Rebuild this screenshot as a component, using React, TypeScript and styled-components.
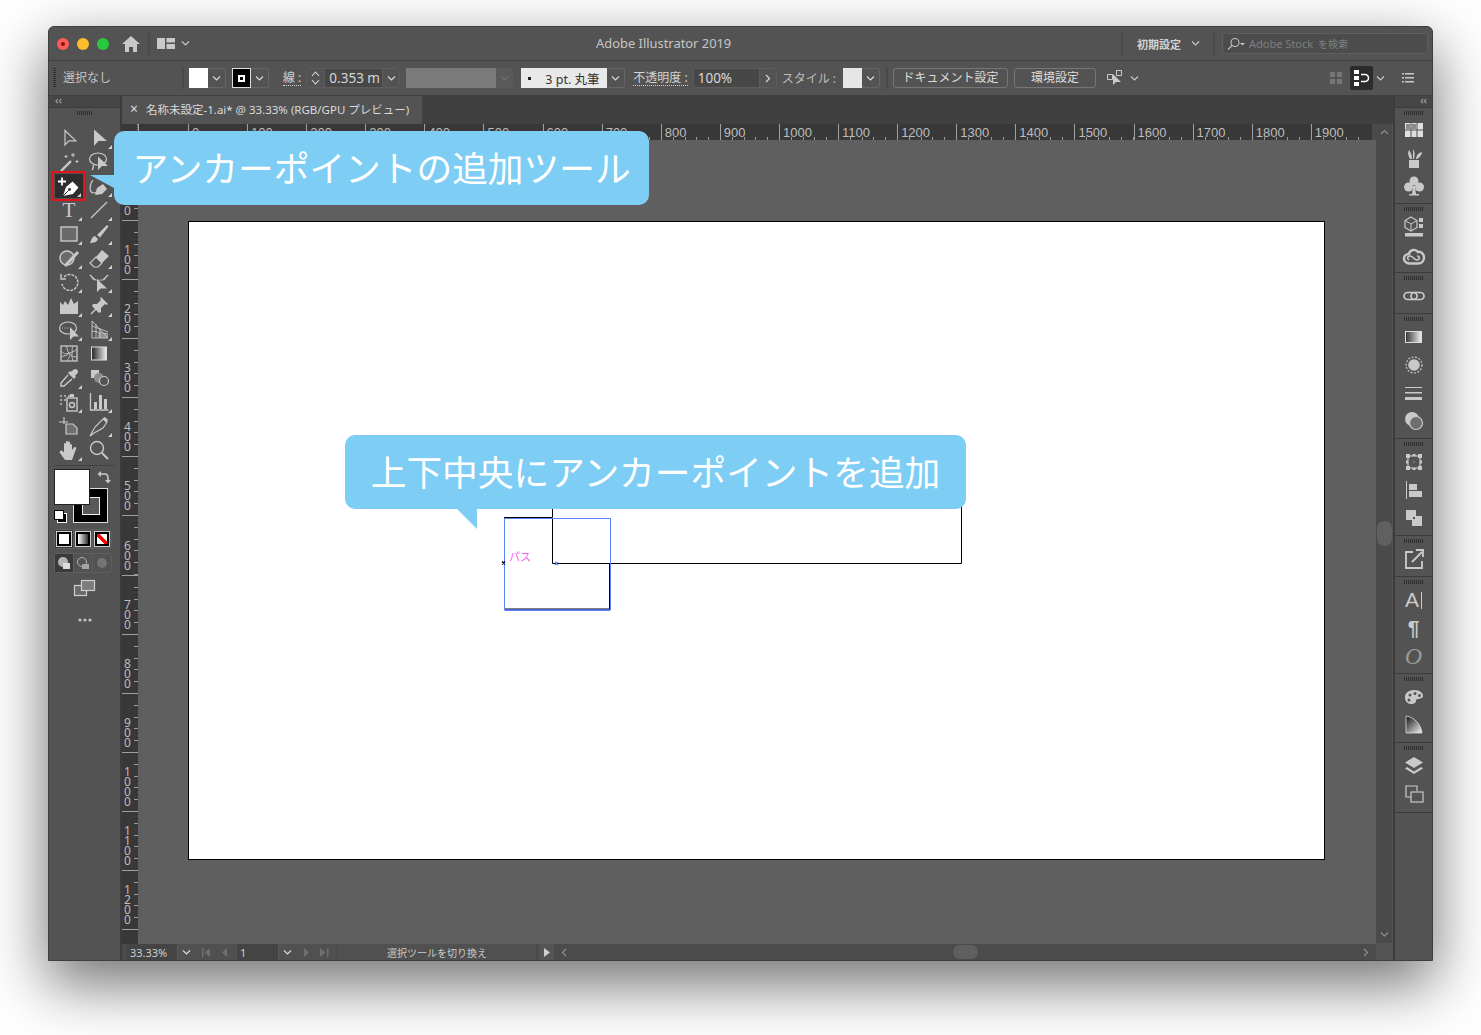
import React from "react"
import styled, { createGlobalStyle, css } from "styled-components"

const UI_FONT = `"Noto Sans", "Noto Sans CJK JP", sans-serif`
const INK = "#c9c9c9"

const GlobalStyle = createGlobalStyle`
  html, body {
    margin: 0;
    background: #fff;
  }
  body {
    width: 1481px;
    height: 1035px;
    overflow: hidden;
    font-family: ${UI_FONT};
  }
`

const Desktop = styled.div`
  padding: 26px 48px;
`

const Window = styled.div`
  position: relative;
  box-sizing: border-box;
  width: 1385px;
  height: 935px;
  display: flex;
  flex-direction: column;
  background: #535353;
  border: 1px solid #3e3e3e;
  border-radius: 6px 6px 0 0;
  box-shadow: 0 22px 60px 2px rgba(0, 0, 0, 0.55);
`

/* title bar */
const TitleBar = styled.div`
  flex: 0 0 33px;
  display: flex;
  align-items: center;
  border-bottom: 1px solid #3f3f3f;
  color: ${INK};
  border-radius: 6px 6px 0 0;
`

const Light = styled.span<{ $color: string; $dot?: boolean }>`
  position: relative;
  width: 12px;
  height: 12px;
  border-radius: 50%;
  background: ${(p) => p.$color};
  margin-right: 8px;
  &:first-child {
    margin-left: 8px;
  }
  ${(p) =>
    p.$dot &&
    css`
      &::after {
        content: "";
        position: absolute;
        left: 4px;
        top: 4px;
        width: 4px;
        height: 4px;
        border-radius: 50%;
        background: #7a1512;
      }
    `}
`

const VRule = styled.span<{ $gap?: number; $h?: number }>`
  flex: none;
  width: 2px;
  height: ${(p) => p.$h ?? 22}px;
  margin-left: ${(p) => p.$gap ?? 0}px;
  background: #4a4a4a;
`

const AppTitle = styled.div`
  flex: none;
  box-sizing: border-box;
  width: 931px;
  padding: 0 0 1px 406px;
  font-size: 12.9px;
  white-space: nowrap;
  color: #c6c6c6;
`

const WorkspaceLabel = styled.span`
  margin-left: 14px;
  font-size: 11px;
  font-weight: 700;
  color: #d2d2d2;
`

const SearchBox = styled.div`
  flex: none;
  box-sizing: border-box;
  width: 206px;
  height: 21px;
  margin-left: 7px;
  display: flex;
  align-items: center;
  gap: 3px;
  padding-left: 3px;
  background: #4c4c4c;
  border: 1px solid #5f5f5f;
  border-radius: 3px;
  color: #7f7f7f;
  font-size: 11px;
  white-space: nowrap;
`

const SearchHint = styled.span`
  font-size: 10px;
  margin-left: 2px;
`

/* control bar */
const ControlBar = styled.div`
  flex: 0 0 34px;
  display: flex;
  align-items: center;
  border-bottom: 1px solid #3f3f3f;
  color: ${INK};
  font-size: 12px;
`

const Grip = styled.span`
  flex: none;
  width: 3px;
  height: 20px;
  margin-left: 4px;
  background: repeating-linear-gradient(#2f2f2f 0 1px, transparent 1px 2px);
`

const SelectionLabel = styled.span`
  flex: none;
  width: 119px;
  margin: -2px 0 0 7px;
  color: #c4c4c4;
`

const Combo = styled.div<{ $gap: number }>`
  flex: none;
  display: flex;
  height: 20px;
  margin-left: ${(p) => p.$gap}px;
`

const Swatch = styled.span<{ $w?: number; $bg?: string }>`
  box-sizing: border-box;
  width: ${(p) => p.$w ?? 19}px;
  height: 20px;
  background: ${(p) => p.$bg ?? "#fff"};
  display: flex;
  align-items: center;
  justify-content: center;
`

const StrokeChip = styled.span`
  box-sizing: border-box;
  width: 19px;
  height: 20px;
  background: #000;
  border: 1px solid #ddd;
  display: flex;
  align-items: center;
  justify-content: center;
  &::after {
    content: "";
    width: 3px;
    height: 3px;
    border: 2px solid #fff;
    background: #000;
  }
`

const DropArrow = styled.span<{ $w?: number; $dim?: boolean }>`
  box-sizing: border-box;
  width: ${(p) => p.$w ?? 18}px;
  height: 20px;
  display: flex;
  align-items: center;
  justify-content: center;
  border: 1px solid ${(p) => (p.$dim ? "#5a5a5a" : "#666")};
  border-left: none;
  border-radius: 0 3px 3px 0;
  background: ${(p) => (p.$dim ? "#5a5a5a" : "transparent")};
  color: ${(p) => (p.$dim ? "#6f6f6f" : "#d8d8d8")};
`

const Field = styled.div<{ $gap: number }>`
  flex: none;
  display: flex;
  height: 20px;
  margin-left: ${(p) => p.$gap}px;
  background: #474747;
  border-radius: 3px;
  border: 1px solid #5c5c5c;
  box-sizing: border-box;
`

const FieldValue = styled.span<{ $w: number }>`
  width: ${(p) => p.$w}px;
  padding-left: 4px;
  box-sizing: border-box;
  font-size: 13.5px;
  line-height: 19px;
  color: #d6d6d6;
  white-space: nowrap;
`

const FieldEnd = styled.span<{ $w?: number; $left?: boolean }>`
  width: ${(p) => p.$w ?? 17}px;
  display: flex;
  flex-direction: column;
  gap: 3px;
  align-items: center;
  justify-content: center;
  color: #d8d8d8;
  background: #535353;
  ${(p) => (p.$left ? "border-right" : "border-left")}: 1px solid #5c5c5c;
`

const FieldLabel = styled.span<{ $gap: number; $dotted?: boolean }>`
  flex: none;
  margin-left: ${(p) => p.$gap}px;
  white-space: nowrap;
  line-height: 15px;
  ${(p) => p.$dotted && "border-bottom: 1px dotted #d0d0d0;"}
  color: ${(p) => (p.$dotted ? "#d4d4d4" : "#bdbdbd")};
`

const BrushValue = styled.span`
  box-sizing: border-box;
  width: 86px;
  height: 20px;
  display: flex;
  align-items: center;
  padding-left: 7px;
  gap: 14px;
  background: #e9e9e9;
  color: #333;
  font-size: 12.5px;
  white-space: nowrap;
  &::before {
    content: "";
    width: 3px;
    height: 3px;
    background: #222;
  }
`

const TextButton = styled.span<{ $w: number; $gap: number }>`
  flex: none;
  box-sizing: border-box;
  width: ${(p) => p.$w}px;
  height: 20px;
  margin-left: ${(p) => p.$gap}px;
  border: 1px solid #767676;
  border-radius: 3px;
  text-align: center;
  font-size: 12px;
  line-height: 18px;
  color: #dcdcdc;
`

const PlainIcon = styled.span<{ $gap: number }>`
  flex: none;
  margin-left: ${(p) => p.$gap}px;
  display: flex;
  align-items: center;
  color: ${INK};
`

const ModeButton = styled.span`
  flex: none;
  width: 23px;
  height: 24px;
  margin-left: 7px;
  border-radius: 2px;
  background: #2b2b2b;
  color: #fff;
  display: flex;
  align-items: center;
  justify-content: center;
`

/* body */
const Body = styled.div`
  flex: 1;
  min-height: 0;
  display: flex;
`

const ToolPanel = styled.div`
  flex: 0 0 71px;
  border-right: 2px solid #3c3c3c;
  display: flex;
  flex-direction: column;
`

const PanelHeader = styled.div<{ $right?: boolean }>`
  flex: 0 0 11px;
  background: #464646;
  border-bottom: 1px solid #3c3c3c;
  color: #b4b4b4;
  font-size: 11px;
  line-height: 8px;
  ${(p) => (p.$right ? "text-align: right; padding-right: 5px;" : "padding-left: 6px;")}
`

const Dots = styled.div<{ $w?: number }>`
  width: ${(p) => p.$w ?? 15}px;
  height: 4px;
  margin: 3px auto 0;
  background: repeating-linear-gradient(90deg, #2e2e2e 0 1px, transparent 1px 2px);
`

const ToolGrid = styled.div`
  display: grid;
  grid-template-columns: 30px 30px;
  grid-auto-rows: 24px;
  padding: 11px 0 0 5px;
`

const ToolCell = styled.div<{ $active?: boolean; $corner?: boolean }>`
  position: relative;
  display: flex;
  align-items: center;
  justify-content: center;
  color: ${(p) => (p.$active ? "#fff" : INK)};
  ${(p) =>
    p.$active &&
    css`
      margin: 0 1px;
      background: #2d2d2d;
      outline: 2px solid #e1121c;
      outline-offset: 1px;
    `}
  ${(p) =>
    p.$corner &&
    css`
      &::after {
        content: "";
        position: absolute;
        right: 2px;
        bottom: 1px;
        border-style: solid;
        border-width: 0 0 4px 4px;
        border-color: transparent transparent #cfcfcf transparent;
      }
    `}
`

const TypeGlyph = styled.span`
  font-family: "Liberation Serif", serif;
  font-size: 21px;
  line-height: 24px;
  font-weight: 400;
`

const PanelRule = styled.div`
  height: 1px;
  margin: 3px 5px 0;
  background: #444;
`

const ColorWell = styled.div`
  position: relative;
  height: 57px;
  margin-top: 3px;
`

const FillChip = styled.div`
  position: absolute;
  z-index: 2;
  left: 5px;
  top: 0;
  box-sizing: border-box;
  width: 36px;
  height: 36px;
  background: #fff;
  border: 1px solid #222;
`

const StrokeWell = styled.div`
  position: absolute;
  left: 24px;
  top: 19px;
  box-sizing: border-box;
  width: 35px;
  height: 35px;
  background: #000;
  border: 1px solid #ddd;
  display: flex;
  align-items: center;
  justify-content: center;
  &::after {
    content: "";
    width: 16px;
    height: 16px;
    background: #595959;
    border: 1px solid #eee;
  }
`

const SwapIcon = styled.span`
  position: absolute;
  left: 48px;
  top: -2px;
  color: ${INK};
`

const MiniDefault = styled.span`
  position: absolute;
  left: 5px;
  top: 41px;
  width: 8px;
  height: 8px;
  background: #fff;
  border: 1px solid #000;
  box-shadow: 3px 3px 0 -1px #000, 3px 3px 0 0 #fff;
`

const SegRow = styled.div<{ $gap: number }>`
  display: flex;
  width: 58px;
  height: 20px;
  margin: ${(p) => p.$gap}px 0 0 5px;
  border: 1px solid #5e5e5e;
  box-sizing: border-box;
  border-radius: 3px;
`

const Seg = styled.span<{ $on?: boolean }>`
  flex: 1;
  display: flex;
  align-items: center;
  justify-content: center;
  background: ${(p) => (p.$on ? "#3a3a3a" : "transparent")};
  & + & {
    border-left: 1px solid #5e5e5e;
  }
`

const ModeChip = styled.span<{ $kind: "fill" | "grad" | "none" }>`
  box-sizing: border-box;
  width: 14px;
  height: 14px;
  border: 2px solid #000;
  outline: 1px solid #d0d0d0;
  ${(p) => p.$kind === "fill" && "background: #fff;"}
  ${(p) => p.$kind === "grad" && "background: linear-gradient(90deg, #fff, #333);"}
  ${(p) =>
    p.$kind === "none" &&
    "background: linear-gradient(135deg, #fff 0 38%, #f00 38% 62%, #fff 62%); transform: scaleX(-1);"}
`

const PanelIcon = styled.div<{ $gap: number }>`
  display: flex;
  justify-content: center;
  margin-top: ${(p) => p.$gap}px;
  color: ${INK};
`

const Center = styled.div`
  flex: 1;
  min-width: 0;
  display: flex;
  flex-direction: column;
`

const TabBar = styled.div`
  flex: 0 0 28px;
  box-sizing: border-box;
  display: flex;
  background: #404040;
`

const DocTab = styled.div`
  width: 300px;
  box-sizing: border-box;
  height: 28px;
  background: #535353;
  padding: 0 0 2px 8px;
  display: flex;
  align-items: center;
  gap: 8px;
  font-size: 11.5px;
  color: #dadada;
  white-space: nowrap;
`

const TabClose = styled.span`
  font-size: 14px;
  line-height: 14px;
`

const Workspace = styled.div`
  flex: 1;
  min-height: 0;
  display: flex;
`

const MainColumn = styled.div`
  flex: 0 0 1254px;
  display: flex;
  flex-direction: column;
`

const HRuler = styled.div`
  flex: 0 0 16px;
  display: flex;
  background: #4a4a4a;
`

const RulerCorner = styled.div`
  flex: 0 0 16px;
  background: #383838;
  border-right: 1px dotted #8a8a8a;
  box-sizing: border-box;
`

const HRulerTrack = styled.div`
  display: flex;
  width: 1234px;
  background: #383838;
`

const HTick = styled.div<{ $w: number }>`
  flex: 0 0 ${(p) => p.$w}px;
  box-sizing: border-box;
  height: 16px;
  padding: 1px 0 0 3px;
  border-left: 1px solid #a0a0a0;
  font-family: "Liberation Sans", sans-serif;
  font-size: 13px;
  line-height: 15px;
  color: #bdbdbd;
  background: repeating-linear-gradient(
      90deg,
      transparent 0 10.82px,
      #9a9a9a 10.82px 11.82px
    )
    left bottom / 100% 3px no-repeat;
`

const CanvasRow = styled.div`
  flex: 1;
  min-height: 0;
  display: flex;
`

const VRuler = styled.div`
  flex: 0 0 16px;
  box-sizing: border-box;
  padding-top: 21.9px;
  background: #383838;
  overflow: hidden;
`

const VTick = styled.div`
  box-sizing: border-box;
  height: 59.1px;
  display: flex;
  flex-direction: column;
  justify-content: flex-end;
  padding: 0 0 4px 2px;
  border-bottom: 1px solid #a0a0a0;
  background: repeating-linear-gradient(
      transparent 0 10.82px,
      #9a9a9a 10.82px 11.82px
    )
    right top / 4px 100% no-repeat;
`

const VDigits = styled.span`
  display: block;
  width: 8px;
  word-break: break-all;
  font-size: 12px;
  line-height: 10px;
  color: #bdbdbd;
`

const Canvas = styled.div`
  flex: 1;
  padding: 81px 0 0 50px;
  background: #5f5f5f;
`

const Artboard = styled.div`
  position: relative;
  box-sizing: border-box;
  width: 1137px;
  height: 639px;
  background: #fff;
  border: 1px solid #000;
`

const Artwork = styled.svg`
  position: absolute;
  left: -1px;
  top: -1px;
`

const PathHint = styled.span`
  position: absolute;
  left: 320px;
  top: 328px;
  font-size: 11px;
  line-height: 14px;
  color: #f55bf5;
`

const StatusBar = styled.div`
  flex: 0 0 16px;
  display: flex;
  background: #4b4b4b;
  font-size: 11px;
  color: #cfcfcf;
`

const StatusField = styled.span<{ $gap?: number; $w: number }>`
  flex: none;
  box-sizing: border-box;
  width: ${(p) => p.$w}px;
  margin-left: ${(p) => p.$gap ?? 0}px;
  padding: 3px 0 0 3px;
  line-height: 12px;
  background: #444;
  border-radius: 2px 0 0 0;
`

const StatusDrop = styled.span`
  flex: none;
  width: 17px;
  display: flex;
  align-items: center;
  justify-content: center;
  color: #dcdcdc;
  background: #515151;
  border-left: 1px solid #5a5a5a;
  box-sizing: border-box;
`

const StatusNav = styled.span<{ $w: number }>`
  flex: none;
  width: ${(p) => p.$w}px;
  display: flex;
  align-items: center;
  justify-content: center;
  gap: 9px;
  color: #6f6f6f;
  background: #505050;
`

const StatusMessage = styled.span`
  flex: none;
  width: 198px;
  margin-left: 2px;
  background: #505050;
  text-align: center;
  font-size: 10px;
  line-height: 18px;
  white-space: nowrap;
  color: #cacaca;
  height: 16px;
`

const StatusPlay = styled.span`
  flex: none;
  width: 15px;
  margin-left: 3px;
  background: #555;
  display: flex;
  align-items: center;
  justify-content: center;
  color: #d0d0d0;
`

const HScroll = styled.div`
  flex: 1;
  display: flex;
  align-items: center;
  justify-content: space-between;
  padding: 0 6px;
  color: #8f8f8f;
`

const HThumb = styled.span`
  width: 25px;
  height: 14px;
  border-radius: 7px;
  background: #5f5f5f;
`

const VScroll = styled.div`
  flex: 0 0 16px;
  display: flex;
  flex-direction: column;
  align-items: center;
  background: #4a4a4a;
  color: #8f8f8f;
`

const VEnd = styled.span`
  flex: 0 0 17px;
  display: flex;
  align-items: center;
  justify-content: center;
`

const VThumb = styled.span`
  width: 15px;
  height: 25px;
  margin-top: 380px;
  border-radius: 7px;
  background: #606060;
`

const VTail = styled(VEnd)`
  margin-top: auto;
`

const VCorner = styled.span`
  flex: 0 0 17px;
  align-self: stretch;
  background: #555;
`

const Dock = styled.div`
  flex: 0 0 39px;
  box-sizing: border-box;
  border-left: 2px solid #3c3c3c;
  display: flex;
  flex-direction: column;
`

const DockGroup = styled.div<{ $h: number; $lead: number; $step: number }>`
  flex: 0 0 ${(p) => p.$h}px;
  box-sizing: border-box;
  border-bottom: 1px solid #3c3c3c;
  color: ${INK};
  & > svg,
  & > span {
    display: flex;
    align-items: center;
    justify-content: center;
    width: 24px;
    height: 28px;
    margin: ${(p) => p.$step}px auto 0;
  }
  & > svg {
    height: 24px;
    padding: 2px 0;
  }
  & > div + svg,
  & > div + span {
    margin-top: ${(p) => p.$lead}px;
  }
`

const DockGlyph = styled.span<{ $serif?: boolean; $bold?: boolean }>`
  font-family: ${(p) => (p.$serif ? `"Liberation Serif", serif` : `"Liberation Sans", sans-serif`)};
  font-size: ${(p) => (p.$serif ? 24 : 21)}px;
  font-style: ${(p) => (p.$serif ? "italic" : "normal")};
  font-weight: ${(p) => (p.$bold ? 700 : 400)};
  color: ${(p) => (p.$serif ? "#9a9a9a" : INK)};
`

const CaretBar = styled.i`
  width: 1px;
  height: 17px;
  margin-left: 2px;
  background: ${INK};
`

/* callouts sit on top of the app window */
const Callout = styled.div<{ $left: number; $top: number; $w: number }>`
  position: absolute;
  z-index: 5;
  left: ${(p) => p.$left}px;
  top: ${(p) => p.$top}px;
  width: ${(p) => p.$w}px;
  height: 74px;
  box-sizing: border-box;
  border-radius: 10px;
  background: #7dcdf4;
  color: #fff;
  font-family: "Noto Sans CJK JP", sans-serif;
  font-size: 35.7px;
  line-height: 72px;
  text-align: center;
  white-space: nowrap;
`

const TailLeft = styled.span`
  position: absolute;
  left: -24px;
  top: 44px;
  border-style: solid;
  border-width: 0 24px 13px 0;
  border-color: transparent #7dcdf4 transparent transparent;
`

const TailDown = styled.span`
  position: absolute;
  left: 112px;
  top: 74px;
  border-style: solid;
  border-width: 0 20px 20px 0;
  border-color: transparent #7dcdf4 transparent transparent;
`

/* small drawings */
type IconProps = { size?: number; children?: React.ReactNode }

const Icon = ({ size = 24, children }: IconProps) => (
  <svg width={size} height={size} viewBox="0 0 24 24" fill="currentColor" stroke="none">
    {children}
  </svg>
)

const Chevron = ({ dir = "down" }: { dir?: "down" | "up" | "left" | "right" }) => {
  const d = {
    down: "M1 2.5 4.5 6 8 2.5",
    up: "M1 6 4.5 2.5 8 6",
    left: "M6 1 2.5 4.5 6 8",
    right: "M3 1 6.5 4.5 3 8",
  }[dir]
  return (
    <svg width="9" height="9" viewBox="0 0 9 9" fill="none" stroke="currentColor" strokeWidth="1.2">
      <path d={d} />
    </svg>
  )
}

const S = (props: React.SVGProps<SVGPathElement>) => (
  <path fill="none" stroke="currentColor" strokeWidth={1.2} {...props} />
)

const tools: { key: string; corner?: boolean; active?: boolean; icon: React.ReactNode }[] = [
  { key: "select", icon: <S d="M8 4.5v14.5l3.8-4.2h7z" /> },
  { key: "direct", corner: true, icon: <path d="M7 3.5V20l4.5-5H20z" /> },
  {
    key: "wand",
    icon: (
      <>
        <S d="M4 21 14 11" strokeWidth={2.4} />
        <S d="M16 3v4M14 5h4M9 5v3M7.5 6.5h3M20 10v3M18.5 11.5h3" strokeWidth={1} />
      </>
    ),
  },
  {
    key: "lasso",
    icon: (
      <>
        <ellipse cx="11" cy="9" rx="8.5" ry="6" fill="none" stroke="currentColor" strokeWidth="1.2" />
        <S d="M6 15c1 2 0 4-1 5" />
        <path d="M11 6.5V20l4-4h6z" />
      </>
    ),
  },
  {
    key: "penAdd",
    active: true,
    corner: true,
    icon: (
      <>
        <S d="M1 7.5h8M5 3.5v8" strokeWidth={1.8} />
        <path d="M6 22l3-9 6.5-5.5 6 6-5.5 6.5z" />
        <path d="M6 22l5.5-5.5" stroke="#2d2d2d" strokeWidth="1" />
        <circle cx="12.5" cy="15.5" r="1.4" fill="#2d2d2d" />
      </>
    ),
  },
  {
    key: "curvature",
    corner: true,
    icon: (
      <>
        <S d="M6 6C2 11 2 19 7 19c3 0 4-3 5-5" />
        <path d="M8 21l2-7 6-4 4 5-5 5z" />
      </>
    ),
  },
  { key: "type", corner: true, icon: <TypeGlyph>T</TypeGlyph> },
  { key: "line", corner: true, icon: <S d="M4 20 20 4" /> },
  {
    key: "rect",
    corner: true,
    icon: <rect x="4" y="5" width="16" height="14" fill="#6a6a6a" stroke="currentColor" strokeWidth="1.4" />,
  },
  {
    key: "brush",
    corner: true,
    icon: (
      <>
        <path d="M3 21c1-1 1-6 5-7l3 3c-1 3-4 4-8 4z" />
        <path d="M10 13 20 3l1.5 1.5-8.5 11z" />
      </>
    ),
  },
  {
    key: "blob",
    corner: true,
    icon: (
      <>
        <circle cx="10" cy="12" r="7" fill="#6a6a6a" stroke="currentColor" strokeWidth="1.4" />
        <S d="M8 20 21 6" strokeWidth={3} />
      </>
    ),
  },
  {
    key: "eraser",
    corner: true,
    icon: (
      <>
        <path d="M9 11 15 4l7 6-7 7z" />
        <S d="M9 11l6 6-4 4H7l-4-4z" />
      </>
    ),
  },
  {
    key: "rotate",
    corner: true,
    icon: (
      <>
        <S d="M7 7a8 8 0 1 1-2 7" strokeDasharray="3 1" strokeWidth={1.4} />
        <S d="M4 4v5h5" strokeWidth={1.4} />
      </>
    ),
  },
  {
    key: "scale",
    corner: true,
    icon: (
      <>
        <S d="M3 5l5 5M21 5l-5 5" strokeWidth={1.4} />
        <S d="M5 8c3 3 11 3 14 0" strokeDasharray="2 1" />
        <path d="M10 9v13l3.5-3.5H20z" />
      </>
    ),
  },
  { key: "warp", corner: true, icon: <path d="M3 20V8l3 3 2-4 3 4 3-7 3 6 4-3v13z" /> },
  {
    key: "pin",
    corner: true,
    icon: (
      <>
        <path d="M14 3l7 7-2 1-1-1-4 4 0 4-2 1-7-7 1-2h4l4-4-1-1z" />
        <S d="M9 15l-5 5" strokeWidth={1.4} />
      </>
    ),
  },
  {
    key: "shape",
    corner: true,
    icon: (
      <>
        <ellipse cx="11" cy="10" rx="8.5" ry="6" fill="none" stroke="currentColor" strokeWidth="1.2" />
        <S d="M5 10h7" strokeDasharray="1 1.5" />
        <path d="M13 9v13l3.5-3.5H22z" />
      </>
    ),
  },
  {
    key: "perspective",
    corner: true,
    icon: (
      <>
        <S d="M5 3v17h16L5 3zM5 8l16 6M5 13l16 3M9 6v14M13 10v10" strokeWidth={0.9} />
        <path d="M11 15l10 1v4H11z" opacity="0.5" />
      </>
    ),
  },
  {
    key: "mesh",
    icon: (
      <>
        <rect x="4" y="4" width="16" height="15" fill="none" stroke="currentColor" strokeWidth="1.3" />
        <S d="M4 9c4 4 5 3 8 2s5-1 8-4M4 15c3-2 5 0 8-4M12 11c2 2 3 4 8 4M9 4c2 3 1 5 3 7s0 5-2 8M16 4c-2 3 0 5-1 8s1 4 1 7" strokeWidth={0.9} />
      </>
    ),
  },
  {
    key: "gradient",
    icon: (
      <>
        <defs>
          <linearGradient id="toolGrad">
            <stop offset="0" stopColor="#222" />
            <stop offset="1" stopColor="#eee" />
          </linearGradient>
        </defs>
        <rect x="4.5" y="5" width="15" height="13" fill="url(#toolGrad)" stroke="#ddd" />
      </>
    ),
  },
  {
    key: "dropper",
    corner: true,
    icon: (
      <>
        <path d="M18 3a3 3 0 0 1 3 3c0 1-3 4-3 4l1 1-2 2-6-6 2-2 1 1s3-3 4-3z" />
        <S d="M11 9 4 17v3h3l8-7" strokeWidth={1.4} />
      </>
    ),
  },
  {
    key: "blend",
    icon: (
      <>
        <path d="M4 4h8v8H4z" />
        <circle cx="12" cy="12" r="5" fill="#8d8d8d" />
        <circle cx="17" cy="15" r="4.5" fill="#535353" stroke="currentColor" strokeWidth="1.2" />
      </>
    ),
  },
  {
    key: "spray",
    corner: true,
    icon: (
      <>
        <path d="M3 5h2v2H3zM7 5h2v2H7zM3 9h2v2H3zM7 9h2v2H7zM3 13h2v2H3zM11 5h2v2h-2z" opacity="0.7" />
        <path d="M13 4h4v3h-4z" />
        <rect x="10" y="8" width="10" height="13" fill="none" stroke="currentColor" strokeWidth="1.4" />
        <circle cx="15" cy="15" r="2.5" fill="none" stroke="currentColor" strokeWidth="1.4" />
      </>
    ),
  },
  {
    key: "graph",
    corner: true,
    icon: (
      <>
        <S d="M3.5 3v17h18" strokeWidth={1.3} />
        <path d="M7 12h3v7H7zM12 5h3v14h-3zM17 9h3v10h-3z" />
      </>
    ),
  },
  {
    key: "artboard",
    icon: (
      <>
        <S d="M7 3v7M2 8h9" />
        <path d="M9 10h7l4 4v6H9z" fill="#6f6f6f" stroke="currentColor" strokeWidth="1.2" />
      </>
    ),
  },
  {
    key: "slice",
    corner: true,
    icon: (
      <>
        <S d="M3 22l5-9 8-8 4 3-4 6-9 5z" />
        <path d="M16 4l2-1 3 3-2 3z" />
      </>
    ),
  },
  {
    key: "hand",
    corner: true,
    icon: (
      <path d="M8 22l-5-7c-1-2 1-3 2.5-2L7 14.5V6c0-1.5 2-1.5 2 0v5.5V4c0-1.5 2-1.5 2 0v7.5V4.5c0-1.5 2-1.5 2 0V12V7c0-1.5 2-1.5 2 0V12l2-2.5c1-1 3 0 2 1.5l-4 11z" />
    ),
  },
  {
    key: "zoom",
    icon: (
      <>
        <circle cx="10" cy="10" r="6.5" fill="none" stroke="currentColor" strokeWidth="1.4" />
        <S d="M15 15l6 6" strokeWidth={2} />
      </>
    ),
  },
]

const dockGroups: { h: number; lead: number; step?: number; items: React.ReactNode[] }[] = [
  {
    h: 96,
    lead: 1,
    items: [
      <Icon key="swatches">
        <path d="M3 5h18v14H3z" fill="#e0e0e0" />
        <path d="M3 12h18M9 5v14M15 5v14" stroke="#535353" strokeWidth="1" />
        <path d="M4 6h4v5H4zM9.5 6H14v5H9.5z" fill="#8a8a8a" />
      </Icon>,
      <Icon key="brushes">
        <path d="M7 14h10v8H7z" />
        <path d="M8 13c-1-3-3-5-1-9 2 3 3 5 3 9zM11 13V3c2 3 2 6 1 10zM14 13c0-3 2-6 6-7 0 3-3 6-5 7z" />
      </Icon>,
      <Icon key="symbols">
        <circle cx="12" cy="7" r="4.5" />
        <circle cx="6.5" cy="13" r="4.5" />
        <circle cx="17.5" cy="13" r="4.5" />
        <path d="M11 12h2l1 8h3v1.5H7V20h3z" />
      </Icon>,
    ],
  },
  {
    h: 69,
    lead: 2,
    step: 3,
    items: [
      <Icon key="libraries">
        <path d="M9 2l6 3.5v7L9 16l-6-3.5v-7z" fill="none" stroke="currentColor" strokeWidth="1.2" />
        <path d="M3 5.5l6 3.5 6-3.5M9 9v7" fill="none" stroke="currentColor" strokeWidth="1" />
        <path d="M17 3h4v4h-4zM17 9h4v4h-4zM3 18h18v3.5H3z" />
      </Icon>,
      <Icon key="cc">
        <path
          d="M7 8a5 5 0 0 1 9-2c3-1 6 2 6 5.5 0 3-2 6-6 6H7.5C4 17.5 2 15 2 12.5 2 10 4 8 7 8z"
          fill="none"
          stroke="currentColor"
          strokeWidth="2.4"
        />
        <path d="M7 14c-2-1-2-4 1-4 3 0 4 4 7 4 3 0 3-4 0-4" fill="none" stroke="currentColor" strokeWidth="1.6" />
      </Icon>,
    ],
  },
  {
    h: 41,
    lead: 2,
    items: [
      <Icon key="links">
        <rect x="2" y="8.5" width="13" height="7" rx="3.5" fill="none" stroke="currentColor" strokeWidth="1.7" />
        <rect x="9" y="8.5" width="13" height="7" rx="3.5" fill="none" stroke="currentColor" strokeWidth="1.7" />
      </Icon>,
    ],
  },
  {
    h: 125,
    lead: 2,
    items: [
      <Icon key="gradient">
        <defs>
          <linearGradient id="dockGrad">
            <stop offset="0" stopColor="#333" />
            <stop offset="1" stopColor="#f2f2f2" />
          </linearGradient>
        </defs>
        <rect x="3.5" y="6.5" width="16" height="11" fill="url(#dockGrad)" stroke="#ddd" />
      </Icon>,
      <Icon key="sun">
        <circle cx="12" cy="12" r="5.8" />
        <circle cx="12" cy="12" r="8" fill="none" stroke="currentColor" strokeWidth="1.2" strokeDasharray="2 1.5" />
      </Icon>,
      <Icon key="stroke">
        <path d="M3 6h17v1H3zM3 11h17v1.5H3zM3 16h17v3H3z" />
      </Icon>,
      <Icon key="transparency">
        <circle cx="10" cy="10" r="7" />
        <circle cx="14" cy="14" r="6.5" fill="#6f6f6f" stroke="currentColor" strokeWidth="1.2" />
      </Icon>,
    ],
  },
  {
    h: 97,
    lead: 2,
    items: [
      <Icon key="transform">
        <rect x="6" y="6" width="12" height="12" fill="none" stroke="currentColor" strokeWidth="1.2" />
        <path d="M4 4h4v4H4zM16 4h4v4h-4zM4 16h4v4H4zM16 16h4v4h-4zM10.5 4h3v2h-3zM10.5 18h3v2h-3zM4 10.5h2v3H4zM18 10.5h2v3h-2zM11.5 11.5h1v1h-1z" />
      </Icon>,
      <Icon key="align">
        <path d="M4 3h1v18H4zM7 6h8v6H7zM7 13h13v6H7z" />
      </Icon>,
      <Icon key="pathfinder">
        <path d="M4 4h10v6h-4v4H4z" />
        <path d="M14 10h6v10H10v-6h4z" />
        <rect x="10.5" y="10.5" width="3" height="3" fill="none" stroke="currentColor" />
      </Icon>,
    ],
  },
  {
    h: 41,
    lead: 2,
    items: [
      <Icon key="export">
        <path d="M11 5H4v16h16v-7" fill="none" stroke="currentColor" strokeWidth="1.8" />
        <path d="M10 15 20 5M14 3h7v7" fill="none" stroke="currentColor" strokeWidth="1.8" />
      </Icon>,
    ],
  },
  {
    h: 97,
    lead: 2,
    items: [
      <DockGlyph key="character">
        A
        <CaretBar />
      </DockGlyph>,
      <DockGlyph key="paragraph" $bold>
        ¶
      </DockGlyph>,
      <DockGlyph key="opentype" $serif>
        O
      </DockGlyph>,
    ],
  },
  {
    h: 69,
    lead: 2,
    items: [
      <Icon key="palette">
        <path d="M3 12c0-4 4-7 9-7 6 0 9 3 9 6 0 2-3 3-5 3s-2 1-2 2-1 3-5 3-6-3-6-7z" />
        <circle cx="8" cy="10" r="1.5" fill="#535353" />
        <circle cx="13" cy="8.5" r="1.5" fill="#535353" />
        <circle cx="17.5" cy="10.5" r="1.5" fill="#535353" />
        <circle cx="7" cy="15" r="1.5" fill="#535353" />
      </Icon>,
      <Icon key="guide">
        <defs>
          <linearGradient id="guideGrad" x1="0" y1="0" x2="1" y2="1">
            <stop offset="0" stopColor="#111" />
            <stop offset="0.6" stopColor="#999" />
            <stop offset="1" stopColor="#f4f4f4" />
          </linearGradient>
        </defs>
        <path d="M4 3c8 1 15 8 16 17H4z" fill="url(#guideGrad)" stroke="#ddd" strokeWidth="0.8" />
      </Icon>,
    ],
  },
  {
    h: 70,
    lead: 2,
    items: [
      <Icon key="layers">
        <path d="M12 3l9 5.5-9 5.5-9-5.5z" />
        <path d="M5 13l-2 1.5L12 20l9-5.500-2-1.500-7 4.500z" />
      </Icon>,
      <Icon key="artboards">
        <path d="M15 9V4H4v11h5" fill="none" stroke="currentColor" strokeWidth="1.2" />
        <rect x="9" y="10" width="12" height="10" fill="none" stroke="currentColor" strokeWidth="1.2" />
      </Icon>,
    ],
  },
]

const H_TICKS = [-100, 0, 100, 200, 300, 400, 500, 600, 700, 800, 900, 1000, 1100, 1200, 1300, 1400, 1500, 1600, 1700, 1800, 1900]
const V_TICKS = [0, 100, 200, 300, 400, 500, 600, 700, 800, 900, 1000, 1100, 1200]

const App = () => (
  <Desktop>
    <GlobalStyle />
    <Window>
      <TitleBar>
        <Light $color="#fc5b57" $dot />
        <Light $color="#febb2c" />
        <Light $color="#29c93f" />
        <PlainIcon $gap={4}>
          <svg width="20" height="18" viewBox="0 0 20 18" fill="currentColor">
            <path d="M10 1 1 9h3v8h4v-5h4v5h4V9h3z" />
          </svg>
        </PlainIcon>
        <VRule $gap={7} />
        <PlainIcon $gap={7}>
          <svg width="18" height="12" viewBox="0 0 18 12" fill="currentColor">
            <path d="M0 0h8v11H0zM9.5 0H18v4.5H9.5zM9.5 6H18v5H9.5z" />
          </svg>
        </PlainIcon>
        <PlainIcon $gap={6}>
          <Chevron />
        </PlainIcon>
        <AppTitle>Adobe Illustrator 2019</AppTitle>
        <VRule />
        <WorkspaceLabel>初期設定</WorkspaceLabel>
        <PlainIcon $gap={10}>
          <Chevron />
        </PlainIcon>
        <VRule $gap={13} />
        <SearchBox>
          <svg width="20" height="14" viewBox="0 0 20 14" fill="none" stroke="#c4c4c4" strokeWidth="1.1">
            <circle cx="9" cy="5.5" r="4" />
            <path d="M6 8.5 2 12.5" />
            <path d="M14 6h5l-2.5 2.5z" fill="#c4c4c4" stroke="none" />
          </svg>
          Adobe Stock<SearchHint>を検索</SearchHint>
        </SearchBox>
      </TitleBar>

      <ControlBar>
        <Grip />
        <SelectionLabel>選択なし</SelectionLabel>
        <VRule />
        <Combo $gap={5}>
          <Swatch />
          <DropArrow>
            <Chevron />
          </DropArrow>
        </Combo>
        <Combo $gap={6}>
          <StrokeChip />
          <DropArrow>
            <Chevron />
          </DropArrow>
        </Combo>
        <FieldLabel $gap={14} $dotted>
          線 :
        </FieldLabel>
        <Field $gap={5}>
          <FieldEnd $left>
            <svg width="9" height="18" viewBox="0 0 9 18" fill="none" stroke="currentColor" strokeWidth="1.1">
              <path d="M1 7l3.5-4L8 7M1 11l3.5 4L8 11" />
            </svg>
          </FieldEnd>
          <FieldValue $w={57}>0.353 m</FieldValue>
          <FieldEnd $w={16}>
            <Chevron />
          </FieldEnd>
        </Field>
        <Combo $gap={6}>
          <Swatch $w={90} $bg="#7a7a7a" />
          <DropArrow $w={17} $dim>
            <Chevron />
          </DropArrow>
        </Combo>
        <Combo $gap={8}>
          <BrushValue>3 pt. 丸筆</BrushValue>
          <DropArrow>
            <Chevron />
          </DropArrow>
        </Combo>
        <FieldLabel $gap={8} $dotted>
          不透明度 :
        </FieldLabel>
        <Field $gap={5}>
          <FieldValue $w={65}>100%</FieldValue>
          <FieldEnd $w={16}>
            <Chevron dir="right" />
          </FieldEnd>
        </Field>
        <FieldLabel $gap={5}>スタイル :</FieldLabel>
        <Combo $gap={7}>
          <Swatch $bg="#e6e6e6" />
          <DropArrow>
            <Chevron />
          </DropArrow>
        </Combo>
        <VRule $gap={6} />
        <TextButton $w={115} $gap={5}>
          ドキュメント設定
        </TextButton>
        <TextButton $w={82} $gap={6}>
          環境設定
        </TextButton>
        <PlainIcon $gap={10}>
          <svg width="18" height="18" viewBox="0 0 18 18" fill="none" stroke="currentColor">
            <path d="M1.5 5.5h5v5h-5zM10.5 1.5h5v5h-5z" strokeWidth="1" />
            <path d="M7 5v11l3-3h5z" fill="currentColor" stroke="none" />
          </svg>
        </PlainIcon>
        <PlainIcon $gap={6}>
          <Chevron />
        </PlainIcon>
        <PlainIcon $gap={190}>
          <svg width="14" height="14" viewBox="0 0 14 14" fill="#767676">
            <path d="M1 1h5v5H1zM8 1h5v5H8zM1 8h5v5H1zM8 8h5v5H8z" />
          </svg>
        </PlainIcon>
        <ModeButton>
          <svg width="17" height="16" viewBox="0 0 17 16" fill="currentColor">
            <path d="M1 0h5v4H1zM1 6h5v4H1zM1 12h5v4H1z" />
            <path d="M8 4.5h4a3.5 3.5 0 0 1 0 7H8" fill="none" stroke="currentColor" strokeWidth="1.6" />
          </svg>
        </ModeButton>
        <PlainIcon $gap={3}>
          <Chevron />
        </PlainIcon>
        <PlainIcon $gap={17}>
          <svg width="12" height="10" viewBox="0 0 12 10" fill="currentColor">
            <path d="M0 0h2v1.5H0zM3 0h9v1.5H3zM0 4h2v1.5H0zM3 4h9v1.5H3zM0 8h2v1.5H0zM3 8h9v1.5H3z" />
          </svg>
        </PlainIcon>
      </ControlBar>

      <Body>
        <ToolPanel>
          <PanelHeader>‹‹</PanelHeader>
          <Dots />
          <ToolGrid>
            {tools.map((tool) => (
              <ToolCell key={tool.key} $active={tool.active} $corner={tool.corner}>
                {tool.key === "type" ? tool.icon : <Icon>{tool.icon}</Icon>}
              </ToolCell>
            ))}
          </ToolGrid>
          <PanelRule />
          <ColorWell>
            <FillChip />
            <StrokeWell />
            <SwapIcon>
              <svg width="14" height="14" viewBox="0 0 14 14" fill="none" stroke="currentColor" strokeWidth="1.6">
                <path d="M2 4h6c2 0 3 1 3 4v3" />
                <path d="M0.5 4 4 1v6zM11 13.5 8 10h6z" fill="currentColor" stroke="none" />
              </svg>
            </SwapIcon>
            <MiniDefault />
          </ColorWell>
          <SegRow $gap={3}>
            <Seg $on>
              <ModeChip $kind="fill" />
            </Seg>
            <Seg>
              <ModeChip $kind="grad" />
            </Seg>
            <Seg>
              <ModeChip $kind="none" />
            </Seg>
          </SegRow>
          <SegRow $gap={4}>
            <Seg $on>
              <svg width="14" height="14" viewBox="0 0 14 14" fill="#b4b4b4">
                <circle cx="6" cy="6" r="5" />
                <path d="M6 7h7v6H6z" fill="#dcdcdc" />
              </svg>
            </Seg>
            <Seg>
              <svg width="14" height="14" viewBox="0 0 14 14" fill="#a4a4a4">
                <circle cx="6" cy="6" r="4.5" fill="none" stroke="#b4b4b4" />
                <path d="M6 8h7v5H6z" />
              </svg>
            </Seg>
            <Seg>
              <svg width="14" height="14" viewBox="0 0 14 14" fill="#747474">
                <circle cx="7" cy="7" r="5" />
              </svg>
            </Seg>
          </SegRow>
          <PanelIcon $gap={6}>
            <svg width="24" height="18" viewBox="0 0 24 18" fill="none" stroke="#cfcfcf" strokeWidth="1.2">
              <rect x="1.5" y="6.5" width="12" height="10" fill="#6a6a6a" />
              <rect x="8.5" y="1.5" width="13" height="10" fill="#7c7c7c" />
            </svg>
          </PanelIcon>
          <PanelIcon $gap={21}>
            <svg width="14" height="4" viewBox="0 0 14 4" fill="#c4c4c4">
              <circle cx="2" cy="2" r="1.6" />
              <circle cx="7" cy="2" r="1.6" />
              <circle cx="12" cy="2" r="1.6" />
            </svg>
          </PanelIcon>
        </ToolPanel>

        <Center>
          <TabBar>
            <DocTab>
              <TabClose>×</TabClose>
              名称未設定-1.ai* @ 33.33% (RGB/GPU プレビュー)
            </DocTab>
          </TabBar>
          <Workspace>
            <MainColumn>
              <HRuler>
                <RulerCorner />
                <HRulerTrack>
                  {H_TICKS.map((n, i) => (
                    <HTick key={n} $w={i === 0 ? 50 : 59.1}>
                      {n < 0 ? "" : n}
                    </HTick>
                  ))}
                </HRulerTrack>
              </HRuler>
              <CanvasRow>
                <VRuler>
                  {V_TICKS.map((n) => (
                    <VTick key={n}>
                      <VDigits>{n}</VDigits>
                    </VTick>
                  ))}
                </VRuler>
                <Canvas>
                  <Artboard>
                    <Artwork width="1137" height="639" viewBox="188 221 1137 639" fill="none">
                      <path d="M504 517.5H552.5V500M552.5 518V563.5H961.5V500M609.5 563.5V609H504" stroke="#000" />
                      <rect x="504.5" y="518.5" width="106" height="91.5" stroke="#5b84ff" />
                      <path d="M505 610H610" stroke="#1b3fe0" />
                      <path d="M502 561.5l3 3M505 561.5l-3 3" stroke="#000" strokeWidth="1.4" />
                      <path d="M555 562l3 3M558 562l-3 3" stroke="#5b84ff" strokeWidth="1.4" />
                    </Artwork>
                    <PathHint>パス</PathHint>
                  </Artboard>
                </Canvas>
              </CanvasRow>
              <StatusBar>
                <StatusField $gap={5} $w={50}>
                  33.33%
                </StatusField>
                <StatusDrop>
                  <Chevron />
                </StatusDrop>
                <StatusNav $w={43}>
                  <svg width="30" height="9" viewBox="0 0 30 9" fill="currentColor">
                    <path d="M1 0h1.5v9H1zM9 0v9L3.5 4.5zM26 0v9l-5-4.5z" />
                  </svg>
                </StatusNav>
                <StatusField $w={41}>1</StatusField>
                <StatusDrop>
                  <Chevron />
                </StatusDrop>
                <StatusNav $w={41}>
                  <svg width="30" height="9" viewBox="0 0 30 9" fill="currentColor">
                    <path d="M3 0v9l5-4.5zM19 0v9l5.5-4.5zM26 0h1.5v9H26z" />
                  </svg>
                </StatusNav>
                <StatusMessage>選択ツールを切り換え</StatusMessage>
                <StatusPlay>
                  <svg width="6" height="9" viewBox="0 0 6 9" fill="currentColor">
                    <path d="M0 0v9l6-4.5z" />
                  </svg>
                </StatusPlay>
                <HScroll>
                  <Chevron dir="left" />
                  <HThumb />
                  <Chevron dir="right" />
                </HScroll>
              </StatusBar>
            </MainColumn>
            <VScroll>
              <VEnd>
                <Chevron dir="up" />
              </VEnd>
              <VThumb />
              <VTail>
                <Chevron />
              </VTail>
              <VCorner />
            </VScroll>
          </Workspace>
        </Center>

        <Dock>
          <PanelHeader $right>‹‹</PanelHeader>
          {dockGroups.map((group, i) => (
            <DockGroup key={i} $h={group.h} $lead={group.lead} $step={group.step ?? 0}>
              <Dots $w={20} />
              {group.items}
            </DockGroup>
          ))}
        </Dock>
      </Body>

      <Callout $left={65} $top={104} $w={535}>
        <TailLeft />
        アンカーポイントの追加ツール
      </Callout>
      <Callout $left={296} $top={408} $w={621}>
        <TailDown />
        上下中央にアンカーポイントを追加
      </Callout>
    </Window>
  </Desktop>
)

export default App
